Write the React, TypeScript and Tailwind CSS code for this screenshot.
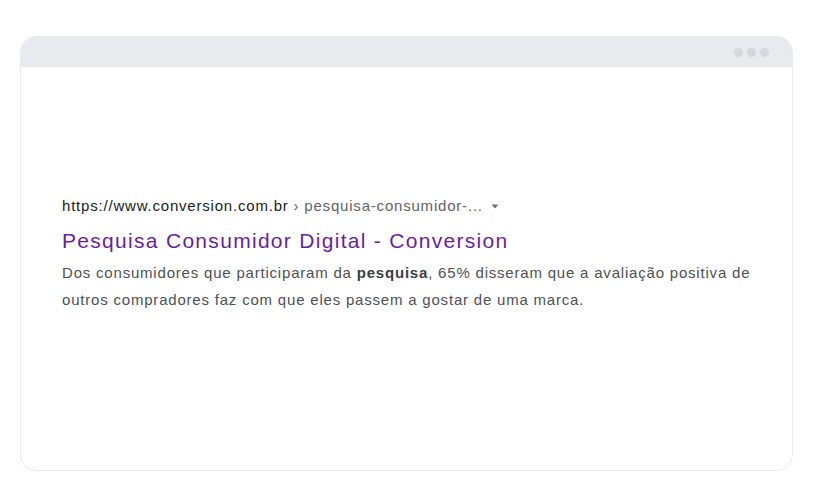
export default function App() {
  return (
    <div className="w-[815px] h-[492px] bg-white pt-[36px] pl-[20px]">
      <div className="w-[773px] h-[435px] rounded-[16px] border border-[#e8eaed] overflow-hidden flex flex-col">
        <div className="h-[30px] bg-[#e8eaed] flex items-center justify-end pr-[23px] gap-[4px] shrink-0">
          <span className="block w-[9px] h-[9px] rounded-full bg-[#d4d7db]" />
          <span className="block w-[9px] h-[9px] rounded-full bg-[#d4d7db]" />
          <span className="block w-[9px] h-[9px] rounded-full bg-[#d4d7db]" />
        </div>
        <div className="flex-1 pl-[41px] pt-[129px] font-['Liberation_Sans',Arial,sans-serif]">
          <div className="flex items-center h-[20px] text-[15px] leading-[20px] tracking-[0.8px] whitespace-nowrap">
            <span className="text-[#202124]">https://www.conversion.com.br</span>
            <span className="text-[#5f6368]">&nbsp;› pesquisa-consumidor-...</span>
            <svg className="ml-[7px]" width="10" height="10" viewBox="0 0 10 10">
              <path d="M1.5 3.5 L8.5 3.5 L5 7.5 Z" fill="#70757a" />
            </svg>
          </div>
          <div className="mt-[11px] text-[21px] leading-[28px] tracking-[1.3px] text-[#681da8] whitespace-nowrap">
            Pesquisa Consumidor Digital - Conversion
          </div>
          <p className="mt-[4px] text-[15px] leading-[27px] tracking-[0.8px] text-[#4d5156] w-[700px]">
            Dos consumidores que participaram da <b className="font-bold text-[#3c4043]">pesquisa</b>, 65% disseram que a avaliação positiva de outros compradores faz com que eles passem a gostar de uma marca.
          </p>
        </div>
      </div>
    </div>
  );
}
